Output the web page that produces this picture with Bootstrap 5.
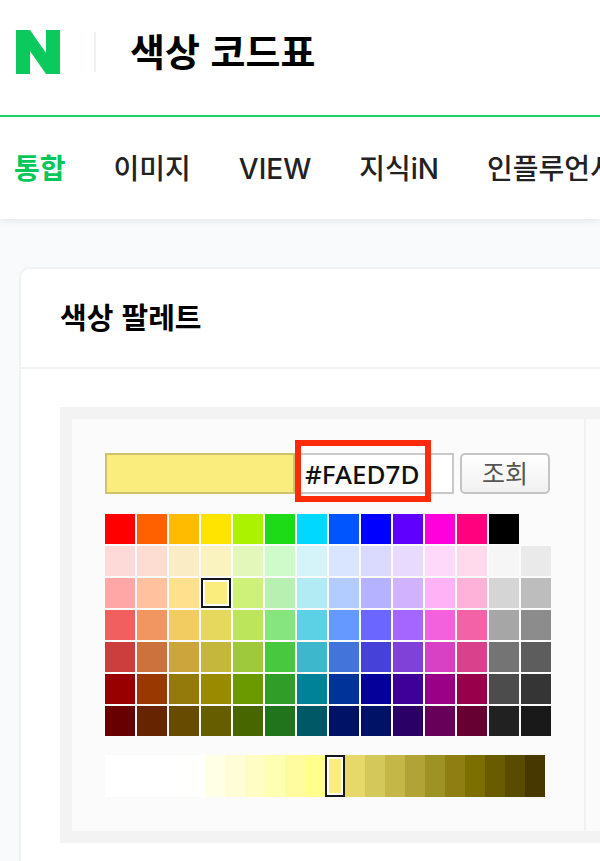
<!DOCTYPE html>
<html lang="ko">
<head>
<meta charset="utf-8">
<meta name="viewport" content="width=device-width, initial-scale=1">
<title>색상 코드표</title>
<link href="https://cdn.jsdelivr.net/npm/bootstrap@5.3.0/dist/css/bootstrap.min.css" rel="stylesheet">
<style>
  body { font-family: "Noto Sans CJK KR", "Noto Sans", sans-serif; background: #f9fafc; color: #000; overflow-x: hidden; min-height: 100vh; }
  .site-head { padding: 0 14px; height: 117px; padding-bottom: 12px; border-bottom: 2px solid #1fd56f; gap: 34px; }
  .brand { width: 46px; height: 44px; }
  .head-rule { width: 2px; height: 40px; background: #eef1f4; }
  .site-title { font-size: 38px; font-weight: 700; line-height: 48px; padding-bottom: 4px; }
  .tabs { height: 102px; padding: 2px 14px 0; gap: 48px; box-shadow: 0 2px 8px rgba(0,0,0,.08); font-family: Inter, "Noto Sans CJK KR", sans-serif; font-size: 28px; font-weight: 500; }
  .tabs a { color: #222; white-space: nowrap; }
  .tabs a.active { color: #03c75a; font-weight: 700; }
  .panel { margin: 48px 0 0 19px; border: 2px solid #eff2f4; border-width: 2px 0 0 2px; border-radius: 10px 0 0 0; background: #fff; }
  .panel-head { padding: 22px 40px 26px 39px; border-bottom: 2px solid #eff2f4; }
  .panel-head h2 { font-size: 29px; line-height: 50px; font-weight: 700; }
  .panel-body { padding: 38px 0 18px 39px; }
  .frame { border: 12px solid #f3f3f3; border-right: 0; background: #fbfbfc; }
  .picker { width: 514px; padding: 34px 0 34px 33px; border-right: 2px solid #f0f2f2; }
  .preview { width: 190px; height: 41px; background: #faed7d; border: 2px solid #cec36c; }
  .hex-wrap { width: 159px; }
  .hex { height: 41px; border: 2px solid #c9c9c9; border-left: 0; background: #fff; font: 500 26px/37px "Noto Sans", sans-serif; color: #111; padding: 0 0 0 10px; outline: 0; }
  .callout { left: 0; top: -13px; width: 136px; height: 62px; border: 6px solid #ff2a0a; pointer-events: none; }
  .look { margin-left: 6px; width: 90px; height: 41px; border: 2px solid #c4c4c4; border-radius: 5px; background: linear-gradient(#fff, #f1f1f1); color: #555; font-size: 25px; line-height: 32px; padding: 0 0 4px; font-weight: 400; }
  .swatches { display: grid; grid-template-columns: repeat(14, 30px); gap: 2px; margin-top: 20px; }
  .swatches button { height: 30px; border: 0; padding: 0; }
  .shades { margin-top: 19px; }
  .shades button { width: 20px; height: 42px; border: 0; padding: 0; }
  .swatches .picked, .shades .picked { border: 2px solid #16181a; box-shadow: inset 0 0 0 2px #fff; }
</style>
<script src="https://cdn.jsdelivr.net/npm/bootstrap@5.3.0/dist/js/bootstrap.bundle.min.js" defer></script>
</head>
<body>
<header class="site-head d-flex align-items-center bg-white">
  <a href="#" class="d-flex" aria-label="N">
    <svg class="brand" viewBox="0 0 46 44" aria-hidden="true"><path fill="#0bc95c" d="M2 0H16L32 23V0H46V44H32L16 21V44H2Z"/></svg>
  </a>
  <div class="head-rule"></div>
  <h1 class="site-title m-0">색상 코드표</h1>
</header>
<nav class="tabs d-flex align-items-center bg-white overflow-hidden">
  <a href="#" class="active text-decoration-none" aria-current="page">통합</a>
  <a href="#" class="text-decoration-none">이미지</a>
  <a href="#" class="text-decoration-none">VIEW</a>
  <a href="#" class="text-decoration-none">지식iN</a>
  <a href="#" class="text-decoration-none">인플루언서</a>
</nav>
<main class="panel">
  <div class="panel-head"><h2 class="m-0">색상 팔레트</h2></div>
  <div class="panel-body">
    <div class="frame">
      <div class="picker">
        <form class="d-flex" onsubmit="return false">
          <div class="preview flex-shrink-0"></div>
          <div class="hex-wrap position-relative">
            <input class="hex w-100 d-block rounded-0" type="text" value="#FAED7D" aria-label="색상 코드">
            <div class="callout position-absolute"></div>
          </div>
          <button class="look" type="submit">조회</button>
        </form>
        <div class="swatches" id="swatches"></div>
        <div class="shades d-flex" id="shades"></div>
      </div>
    </div>
  </div>
</main>
<script>
  const palette = [
    "ff0000 ff6000 ffbb00 ffe400 abf200 1ddb16 00d8ff 0055ff 0000ff 5f00ff ff00dd ff007f 000000 -",
    "fdd9d7 fddcd2 faecc5 faf2bf e4f7ba cefbc9 d4f4fa d9e5ff dad9ff e8d9ff ffd9fa ffd9ec f6f6f6 eaeaea",
    "ffa7a7 ffc19e ffe08c faed7d cef279 b7f0b1 b2ebf4 b2ccff b5b2ff d1b2ff ffb2f5 ffb2d9 d5d5d5 bdbdbd",
    "f15f5f f29661 f2cb61 e5d85c bce55c 86e57f 5cd1e5 6699ff 6b66ff a566ff f361dc f361a6 a6a6a6 8c8c8c",
    "cc3d3d cc723d cca63d c4b73b 9fc93c 47c83e 3db7cc 4374d9 4641d9 8041d9 d941c5 d9418c 747474 5d5d5d",
    "980000 993800 937a0a 998a00 6b9900 2f9d27 008299 003399 050099 3f0099 990085 99004c 4c4c4c 353535",
    "670000 662500 664b00 665c00 476600 22741c 005766 001266 001266 2a0066 660058 660033 212121 191919"
  ];
  const shades = "ffffff ffffff ffffff ffffff fffffd ffffe6 fffcd8 fffdc4 ffffb1 fffca0 ffff8c faed7d e6d969 d5c85a c4b748 b2a336 9f9225 8f7e11 7c6f00 695c00 594b00 463800".split(" ");
  function add(host, hex, picked) {
    if (hex === "-") { host.append(document.createElement("span")); return; }
    const b = document.createElement("button");
    b.type = "button";
    b.style.backgroundColor = "#" + hex;
    b.setAttribute("aria-label", "#" + hex.toUpperCase());
    if (picked) b.className = "picked";
    host.append(b);
  }
  const grid = document.getElementById("swatches");
  palette.forEach(row => row.split(" ").forEach(hex => add(grid, hex, hex === "faed7d")));
  shades.forEach(hex => add(document.getElementById("shades"), hex, hex === "faed7d"));
</script>
</body>
</html>
